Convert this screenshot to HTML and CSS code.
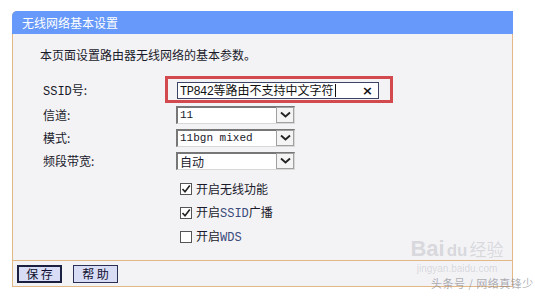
FILE: index.html
```html
<!DOCTYPE html>
<html lang="zh-CN">
<head>
<meta charset="utf-8">
<link rel="stylesheet" href="styles.css">
</head>
<body>
<div class="panel">
  <div class="title">无线网络基本设置</div>
  <div class="body">
    <p class="intro">本页面设置路由器无线网络的基本参数。</p>
    <div class="form">
      <div class="row row-ssid">
        <span class="label"><span class="mono">SSID</span>号:</span>
        <div class="redbox">
          <div class="input"><span class="txt"><span class="mono">TP842</span>等路由不支持中文字符</span><span class="caret"></span><span class="clear">×</span></div>
        </div>
      </div>
      <div class="row">
        <span class="label">信道:</span>
        <div class="select"><span class="val mono">11</span><span class="arrow"><svg width="11" height="7" viewBox="0 0 11 7"><path d="M1 1.5 L5.5 5.5 L10 1.5" fill="none" stroke="#222" stroke-width="1.8"/></svg></span></div>
      </div>
      <div class="row">
        <span class="label">模式:</span>
        <div class="select"><span class="val mono">11bgn mixed</span><span class="arrow"><svg width="11" height="7" viewBox="0 0 11 7"><path d="M1 1.5 L5.5 5.5 L10 1.5" fill="none" stroke="#222" stroke-width="1.8"/></svg></span></div>
      </div>
      <div class="row">
        <span class="label">频段带宽:</span>
        <div class="select"><span class="val">自动</span><span class="arrow"><svg width="11" height="7" viewBox="0 0 11 7"><path d="M1 1.5 L5.5 5.5 L10 1.5" fill="none" stroke="#222" stroke-width="1.8"/></svg></span></div>
      </div>
      <div class="checks">
        <div class="check"><span class="box"><svg width="10" height="10" viewBox="0 0 10 10"><path d="M1.5 5 L4 7.8 L8.8 1.5" fill="none" stroke="#222" stroke-width="1.6"/></svg></span><span class="ctext">开启无线功能</span></div>
        <div class="check"><span class="box"><svg width="10" height="10" viewBox="0 0 10 10"><path d="M1.5 5 L4 7.8 L8.8 1.5" fill="none" stroke="#222" stroke-width="1.6"/></svg></span><span class="ctext">开启<span class="mono blue">SSID</span>广播</span></div>
        <div class="check"><span class="box"></span><span class="ctext">开启<span class="mono blue">WDS</span></span></div>
      </div>
    </div>
  </div>
  <div class="footer">
    <button class="btn btn-default">保 存</button>
    <button class="btn">帮 助</button>
  </div>
  <div class="watermark">
    <div class="wm-logo"><span class="wm-bai">Bai</span><span class="wm-paw">du</span><span class="wm-jy">经验</span></div>
    <div class="wm-url">jingyan.baidu.com</div>
  </div>
  <div class="credit">头条号 / 网络真锋少</div>
</div>
</body>
</html>
```

FILE: styles.css
```css
* { box-sizing: border-box; }
html, body { margin: 0; padding: 0; }
body {
  width: 535px;
  height: 296px;
  background: #ffffff;
  font-family: "Noto Sans CJK SC", "DejaVu Sans", sans-serif;
  font-size: 12px;
  color: #1a1a2a;
  overflow: hidden;
}
.mono { font-family: "Liberation Mono", "DejaVu Sans Mono", monospace; }
.blue { color: #3a4a7a; }

.panel {
  position: relative;
  margin: 11px 0 0 12px;
  width: 501px;
  height: 276px;
  background: #f3f3f6;
  border-left: 1px solid #e3b887;
  border-right: 1px solid #e3b887;
  border-bottom: 1px solid #e3b887;
  border-top-left-radius: 5px;
  display: flex;
  flex-direction: column;
}
.title {
  height: 23px;
  margin-left: -1px;
  margin-right: -1px;
  background: #6699fa;
  color: #ffffff;
  font-size: 12px;
  line-height: 23px;
  padding-left: 10px;
  border-top-left-radius: 5px;
}
.body {
  flex: 1;
  padding: 0 0 0 27px;
}
.intro {
  margin: 13px 0 0 0;
  line-height: 16px;
  height: 16px;
}
.form {
  margin-top: 14px;
  padding-left: 3px;
}
.row {
  display: flex;
  align-items: center;
  height: 23px;
}
.row-ssid { height: 27px; margin-top: -1px; }
.label {
  width: 133px;
  flex: none;
}
.redbox {
  width: 228px;
  height: 27px;
  border: 3px solid #d24a4e;
  padding: 3px 0 0 9px;
  margin-left: -11px;
}
.input {
  width: 202px;
  height: 17px;
  background: #ffffff;
  border: 1px solid #3c4466;
  display: flex;
  align-items: center;
  padding-left: 2px;
  font-size: 12px;
  color: #111;
}
.txt { line-height: 15px; white-space: nowrap; }
.txt .mono { letter-spacing: -0.5px; }
.caret {
  width: 1px;
  height: 13px;
  background: #111;
  margin-left: 1px;
}
.clear {
  margin-left: auto;
  margin-right: 5px;
  font-family: "DejaVu Sans", sans-serif;
  font-size: 13px;
  font-weight: bold;
  line-height: 15px;
}
.select {
  width: 119px;
  height: 18px;
  background: #ffffff;
  border-top: 2px solid #777;
  border-left: 2px solid #777;
  border-right: 1px solid #d8d8d8;
  border-bottom: 1px solid #d8d8d8;
  display: flex;
  align-items: center;
}
.val {
  flex: 1;
  padding-left: 2px;
  font-size: 12px;
  white-space: nowrap;
}
.val.mono { font-size: 11px; }
.arrow {
  width: 18px;
  height: 16px;
  margin: -1px 0 0 0;
  background: #f4f4f4;
  border: 1px solid #a0a0a0;
  display: flex;
  align-items: center;
  justify-content: center;
}
.checks {
  margin-top: 10px;
  padding-left: 137px;
  display: flex;
  flex-direction: column;
  gap: 11px;
}
.check {
  display: flex;
  align-items: center;
  height: 13px;
}
.ctext { line-height: 13px; white-space: nowrap; }
.box {
  width: 12px;
  height: 12px;
  border: 1px solid #555;
  background: #ffffff;
  margin-right: 4px;
  display: flex;
  align-items: center;
  justify-content: center;
}
.footer {
  height: 26px;
  border-top: 1px solid #e3b887;
  display: flex;
  align-items: center;
  gap: 11px;
  padding: 0 0 0 4px;
}
.btn {
  width: 45px;
  height: 18px;
  padding: 0;
  background: #d9dcf5;
  border: 1px solid #2a2f55;
  font-family: "Noto Sans CJK SC", sans-serif;
  font-size: 12px;
  line-height: 14px;
  color: #101030;
}
.btn-default { border: 2px solid #1c2040; }

.watermark {
  position: absolute;
  left: 398px;
  top: 226px;
  width: 92px;
  color: rgba(150, 150, 160, 0.3);
  text-align: center;
  white-space: nowrap;
}
.wm-logo {
  font-family: "Liberation Sans", sans-serif;
  font-size: 22px;
  font-weight: bold;
  line-height: 24px;
  display: flex;
  justify-content: center;
  align-items: baseline;
  gap: 2px;
}
.wm-paw { font-size: 17px; }
.wm-jy { font-family: "Noto Sans CJK SC", sans-serif; font-size: 17px; font-weight: normal; }
.wm-url {
  font-family: "Liberation Sans", sans-serif;
  font-size: 10px;
  line-height: 12px;
}
.credit {
  position: absolute;
  left: 418px;
  top: 265px;
  font-size: 11px;
  line-height: 14px;
  white-space: nowrap;
  color: rgba(120, 120, 130, 0.6);
  letter-spacing: 0.5px;
}
```
